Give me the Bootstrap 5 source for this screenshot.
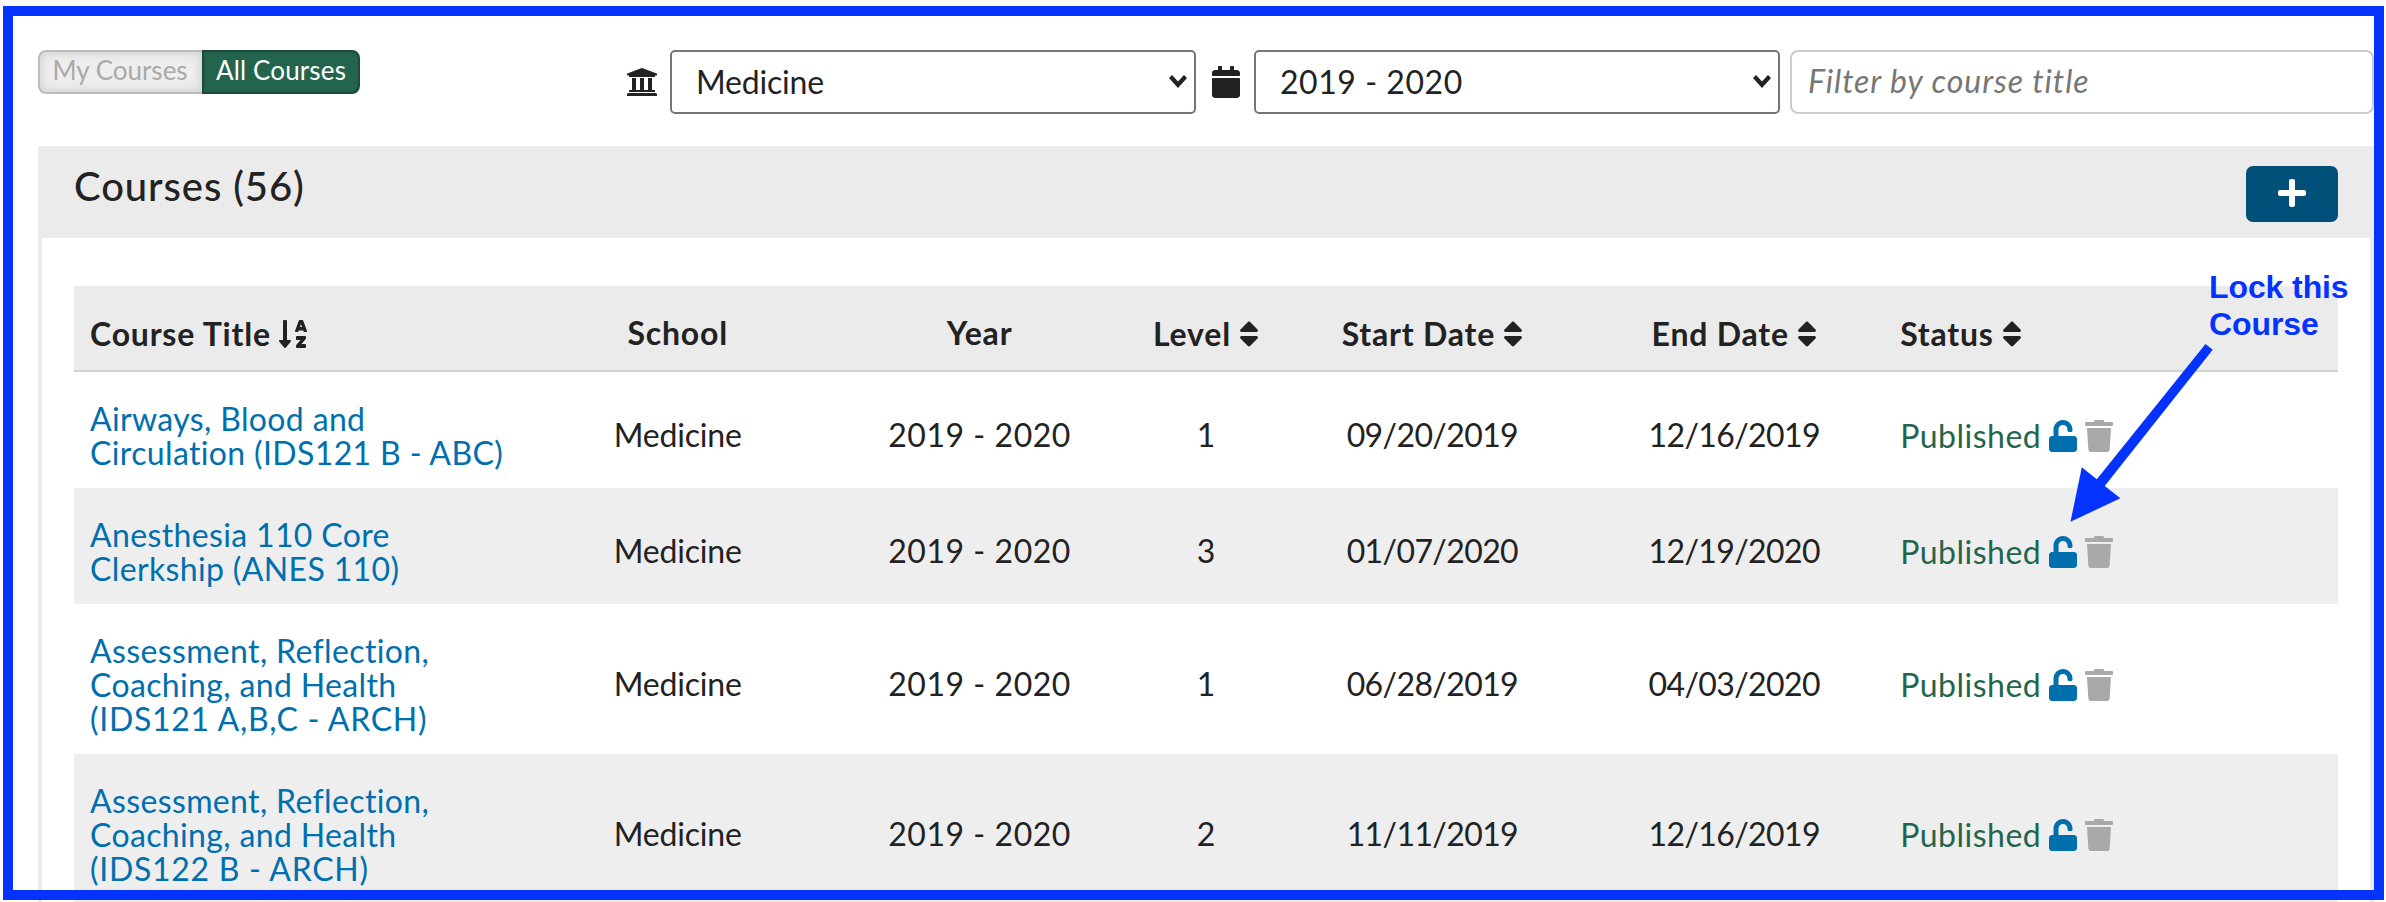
<!DOCTYPE html>
<html lang="en">
<head>
<meta charset="utf-8">
<title>Courses</title>
<link rel="stylesheet" href="https://cdn.jsdelivr.net/npm/bootstrap@5.3.0/dist/css/bootstrap.min.css">
<style>
body{font-family:Lato,"Noto Sans",sans-serif;font-size:32px;line-height:34px;color:#222;background:#fff;overflow:hidden;height:902px;font-variant-ligatures:none}
.frame{position:absolute;left:3px;top:6px;width:2381px;height:894px;border:10px solid #0433ff;pointer-events:none}
.topstrip{height:6px;background:#fbfbfb}
.page{width:2336px;margin-left:38px;padding-top:44px}
.tools{height:96px}
.toggle .btn{height:44px;font-size:26px;line-height:36px;border-width:2px;white-space:nowrap}
.toggle .off{width:164px;padding:0 2px 4px 0;background:#eee;color:#aaa;border-color:#bbb;border-right-width:0;box-shadow:inset 0 0 8px 2px #bbb8;border-radius:8px 0 0 8px}
.toggle .on{width:158px;padding:0 0 4px 0;background:#23654c;color:#fff;border-color:#1b4d3a;border-radius:0 8px 8px 0;letter-spacing:.15px;box-shadow:inset 0 0 2px #1b4d3a}
.pick{width:526px;height:64px;border:2px solid #767676;border-radius:5px;padding:0 7px 0 24px;background:#fff}
.find{width:584px;height:64px;border:2px solid #ccc;border-radius:8px;padding:0 16px 4px;font-size:32px;font-style:italic;letter-spacing:.95px}
.find::placeholder{color:#767676;opacity:1}
.t-med{letter-spacing:-.2px}
.t-year{letter-spacing:.55px}
.t-date{letter-spacing:-.6px}
.panel{border:4px solid #ebebeb;border-top:0;border-bottom:0;height:760px}
.panel-top{height:92px;background:#ebebeb;margin:0 -4px;padding:20px 36px 0}
.panel-top h1{font-size:40px;line-height:42px;font-weight:500;margin:-1px 0 0;letter-spacing:.9px}
.add{width:92px;height:56px;background:#00507a;border-radius:7px;color:#fff;padding:0 0 3px}
.grid-t{table-layout:fixed;width:2264px;margin:48px 0 0 32px;border-collapse:separate;border-spacing:0}
.grid-t th{background:#ebebeb;height:86px;border-bottom:2px solid #d3d3d3;padding:12px 16px 0;text-align:center;font-weight:700;white-space:nowrap;letter-spacing:.8px}
.grid-t th:nth-child(2),.grid-t th:nth-child(3){padding-top:10px}
.grid-t td{padding:30px 16px 18px;text-align:center;white-space:nowrap}
.grid-t tr>:first-child{text-align:left}
.grid-t tr>:last-child{text-align:left;padding-left:15px}
.grid-t tr:nth-child(even) td{background:#eee}
.grid-t a{color:#006fae;text-decoration:none;letter-spacing:.36px}
.grid-t .code{letter-spacing:.7px}
.grid-t td:nth-child(n+2):nth-child(-n+6){padding-top:29px;padding-bottom:19px}
.ok{color:#23654c;letter-spacing:.5px}
svg{fill:currentColor;display:block;flex:none}
.note{position:absolute;left:2209px;top:269px;font:bold 32px/37px "Liberation Sans",Arial,sans-serif;color:#0433ff;letter-spacing:-.1px}
.arrow{position:absolute;left:2050px;top:330px;color:#0433ff}
</style>
</head>
<body>
<svg width="0" height="0" class="position-absolute">
<symbol id="trash" viewBox="0 0 448 512"><path d="M432 32H312l-9.4-18.7A24 24 0 0 0 281.1 0H166.8a23.72 23.72 0 0 0-21.4 13.3L136 32H16A16 16 0 0 0 0 48v32a16 16 0 0 0 16 16h416a16 16 0 0 0 16-16V48a16 16 0 0 0-16-16zM32 128l21.200 339a48 48 0 0 0 47.9 45h245.8a48 48 0 0 0 47.9-45L416 128z"/></symbol>
<symbol id="unlock" viewBox="0 0 448 512"><path d="M400 256H152V152.9c0-39.6 31.7-72.5 71.3-72.9 40-.4 72.7 32.1 72.7 72v16c0 13.3 10.7 24 24 24h32c13.3 0 24-10.7 24-24v-16C376 68 307.5-.3 223.5 0 139.5.3 72 69.5 72 153.5V256H48c-26.5 0-48 21.5-48 48v160c0 26.5 21.5 48 48 48h352c26.5 0 48-21.5 48-48V304c0-26.5-21.5-48-48-48z"/></symbol>
<symbol id="sort" viewBox="0 0 320 512"><path d="M41 288h238c21.4 0 32.1 25.9 17 41L177 448c-9.4 9.4-24.6 9.4-33.9 0L24 329c-15.1-15.1-4.4-41 17-41zm255-105L177 64c-9.4-9.4-24.6-9.4-33.9 0L24 183c-15.1 15.1-4.4 41 17 41h238c21.4 0 32.1-25.9 17-41z"/></symbol>
</svg>
<div class="topstrip"></div>
<main class="page">
  <div class="tools d-flex align-items-start">
    <div class="toggle d-flex"><button class="btn off">My Courses</button><button class="btn on">All Courses</button></div>
    <div class="d-flex align-items-center ms-auto">
      <svg width="32" height="32" viewBox="0 0 512 512" style="margin-right:12px"><path d="M496 128v16a8 8 0 0 1-8 8h-24v12c0 6.627-5.373 12-12 12H60c-6.627 0-12-5.373-12-12v-12H24a8 8 0 0 1-8-8v-16a8 8 0 0 1 4.941-7.392l232-88a7.996 7.996 0 0 1 6.118 0l232 88A8 8 0 0 1 496 128zm-24 304H40c-13.255 0-24 10.745-24 24v16a8 8 0 0 0 8 8h464a8 8 0 0 0 8-8v-16c0-13.255-10.745-24-24-24zM96 192v192H60c-6.627 0-12 5.373-12 12v20h416v-20c0-6.627-5.373-12-12-12h-36V192h-64v192h-64V192h-64v192h-64V192H96z"/></svg>
      <div class="pick d-flex align-items-center justify-content-between"><span class="t-med">Medicine</span><svg width="18" height="14" viewBox="0 0 18 14"><path d="M0 3L3 0 9 6.500 15 0 18 3 9 13z"/></svg></div>
      <svg width="28" height="32" viewBox="0 0 448 512" style="margin:0 14px 0 16px"><path d="M12 192h424c6.600 0 12 5.400 12 12v260c0 26.500-21.500 48-48 48H48c-26.500 0-48-21.500-48-48V204c0-6.600 5.400-12 12-12zm436-44v-36c0-26.500-21.500-48-48-48h-48V12c0-6.600-5.400-12-12-12h-40c-6.600 0-12 5.400-12 12v52H160V12c0-6.600-5.400-12-12-12h-40c-6.600 0-12 5.400-12 12v52H48C21.500 64 0 85.500 0 112v36c0 6.600 5.400 12 12 12h424c6.600 0 12-5.400 12-12z"/></svg>
      <div class="pick d-flex align-items-center justify-content-between"><span class="t-year">2019 - 2020</span><svg width="18" height="14" viewBox="0 0 18 14"><path d="M0 3L3 0 9 6.500 15 0 18 3 9 13z"/></svg></div>
      <input class="find" style="margin-left:10px" placeholder="Filter by course title">
    </div>
  </div>
  <section class="panel">
    <div class="panel-top d-flex justify-content-between align-items-start">
      <h1>Courses (56)</h1>
      <button class="btn add d-flex align-items-center justify-content-center border-0" aria-label="Add"><svg width="28" height="32" viewBox="0 0 448 512"><path d="M416 208H272V64c0-17.670-14.330-32-32-32h-32c-17.670 0-32 14.330-32 32v144H32c-17.670 0-32 14.330-32 32v32c0 17.670 14.330 32 32 32h144v144c0 17.670 14.330 32 32 32h32c17.670 0 32-14.330 32-32V304h144c17.670 0 32-14.330 32-32v-32c0-17.670-14.330-32-32-32z"/></svg></button>
    </div>
    <table class="grid-t">
      <colgroup><col style="width:20%"><col style="width:13.333%"><col style="width:13.333%"><col style="width:6.667%"><col style="width:13.333%"><col style="width:13.333%"><col style="width:20%"></colgroup>
      <thead><tr>
        <th><span class="d-inline-flex align-items-center gap-2">Course Title<svg width="28" height="32" viewBox="0 0 448 512"><path d="M176 352h-48V48a16 16 0 0 0-16-16H80a16 16 0 0 0-16 16v304H16c-14.190 0-21.360 17.240-11.290 27.310l80 96a16 16 0 0 0 22.620 0l80-96C197.350 369.260 190.220 352 176 352zm240-64H288a16 16 0 0 0-16 16v32a16 16 0 0 0 16 16h56l-61.260 70.450A32 32 0 0 0 272 446.370V464a16 16 0 0 0 16 16h128a16 16 0 0 0 16-16v-32a16 16 0 0 0-16-16h-56l61.260-70.450A32 32 0 0 0 432 321.630V304a16 16 0 0 0-16-16zm31.060-85.380l-59.270-160A16 16 0 0 0 372.720 32h-41.440a16 16 0 0 0-15.070 10.620l-59.270 160A16 16 0 0 0 272 224h24.830a16 16 0 0 0 15.230-11.080l4.420-12.920h71l4.410 12.920A16 16 0 0 0 407.160 224H432a16 16 0 0 0 15.060-21.380zM335.610 144L352 96l16.390 48z"/></svg></span></th>
        <th>School</th><th>Year</th>
        <th><span class="d-inline-flex align-items-center gap-2">Level<svg width="20" height="32"><use href="#sort"/></svg></span></th>
        <th><span class="d-inline-flex align-items-center gap-2">Start Date<svg width="20" height="32"><use href="#sort"/></svg></span></th>
        <th><span class="d-inline-flex align-items-center gap-2">End Date<svg width="20" height="32"><use href="#sort"/></svg></span></th>
        <th><span class="d-inline-flex align-items-center gap-2">Status<svg width="20" height="32"><use href="#sort"/></svg></span></th>
      </tr></thead>
      <tbody id="rows"></tbody>
    </table>
  </section>
</main>
<div class="frame"></div>
<div class="note">Lock this<br>Course</div>
<svg class="arrow" width="180" height="210" viewBox="2050 330 180 210"><path d="M2205.500 344L2212.700 349.700 2104.700 486 2120.400 498.300 2070.500 521.700 2081.800 467.300 2096.800 479.300z"/></svg>
<script>
const rows=[["Airways, Blood and<br>Circulation (IDS121 B - ABC)",1,"09/20/2019","12/16/2019"],
["Anesthesia 110 Core<br>Clerkship (ANES 110)",3,"01/07/2020","12/19/2020"],
["Assessment, Reflection,<br>Coaching, and Health<br><span class='code'>(IDS121 A,B,C - ARCH)</span>",1,"06/28/2019","04/03/2020"],
["Assessment, Reflection,<br>Coaching, and Health<br><span class='code'>(IDS122 B - ARCH)</span>",2,"11/11/2019","12/16/2019"]];
document.getElementById("rows").innerHTML=rows.map(r=>`<tr><td><a href="#">${r[0]}</a></td><td class="t-med">Medicine</td><td class="t-year">2019 - 2020</td><td>${r[1]}</td><td class="t-date">${r[2]}</td><td class="t-date">${r[3]}</td><td><span class="d-flex align-items-center gap-2"><span class="ok">Published</span><svg width="28" height="32" color="#006fae"><use href="#unlock"/></svg><svg width="28" height="32" color="#a9a9a9"><use href="#trash"/></svg></span></td></tr>`).join("");
</script>
<script src="https://cdn.jsdelivr.net/npm/bootstrap@5.3.0/dist/js/bootstrap.bundle.min.js"></script>
</body>
</html>
